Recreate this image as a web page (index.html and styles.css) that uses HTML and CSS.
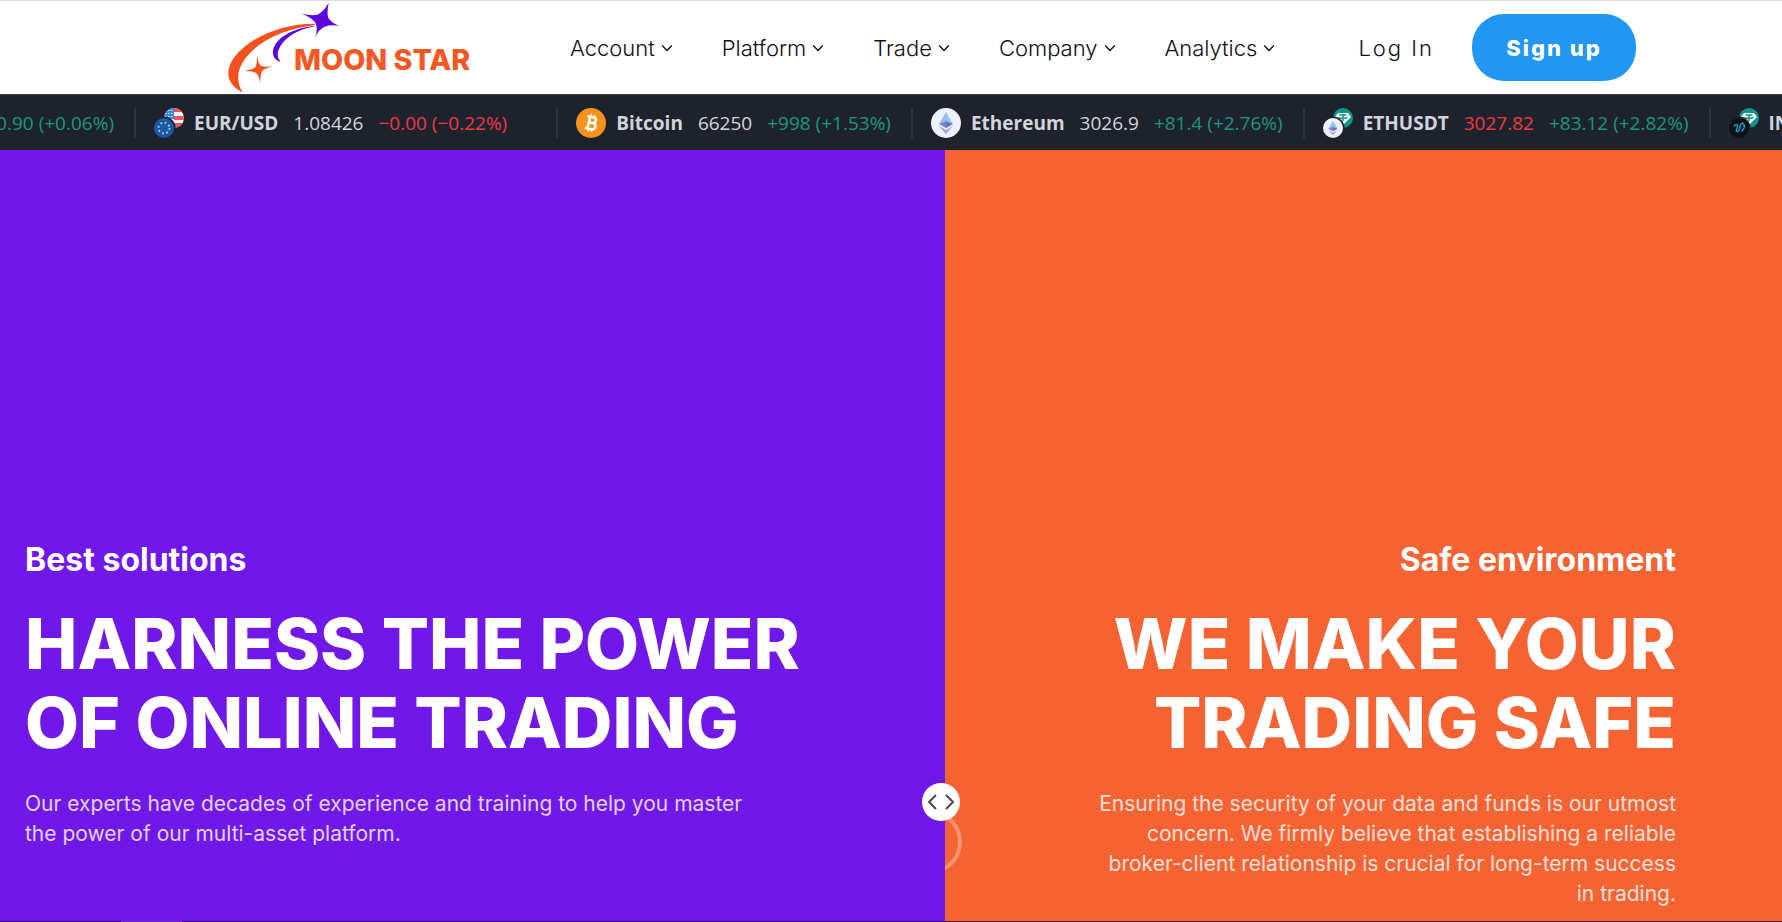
FILE: index.html
```html
<!DOCTYPE html>
<html lang="en">
<head>
<meta charset="utf-8">
<meta name="viewport" content="width=device-width, initial-scale=1">
<title>Moon Star</title>
<link rel="stylesheet" href="styles.css">
</head>
<body>
<svg class="defs" width="0" height="0" aria-hidden="true">
  <symbol id="chevron" viewBox="0 0 10 10"><path d="M1 3l4 4 4-4" fill="none" stroke="currentColor" stroke-width="1.2"/></symbol>
  <symbol id="eth" viewBox="0 0 30 30">
    <circle cx="15" cy="15" r="15" fill="#eff1fb"/>
    <path d="M15 4l-7 12 7-3z" fill="#a5b5f5"/><path d="M15 4l7 12-7-3z" fill="#7fd0e8"/>
    <path d="M8 16l7-3v7z" fill="#7184d8"/><path d="M22 16l-7-3v7z" fill="#6f6bd0"/>
    <path d="M8 18l7 8v-4z" fill="#9c9cf0"/><path d="M22 18l-7 8v-4z" fill="#c69bea"/>
  </symbol>
  <symbol id="tether" viewBox="0 0 20 20">
    <circle cx="10" cy="10" r="10" fill="#0e9488"/>
    <path d="M5 5h10l3 4-8 8-8-8z" fill="#fff"/>
    <path d="M6.500 7h7M10 7v6M5.500 9.500q4.500 2 9 0" fill="none" stroke="#0e9488" stroke-width="1.500"/>
  </symbol>
</svg>

<header class="header">
  <a class="logo" href="#" aria-label="Moon Star">
    <svg class="logo-art" viewBox="51 3 732 279">
      <path d="M314 71C220 70 120 110 73 172C44 212 48 252 98 278C76 240 82 205 110 170C152 118 230 86 314 75z" fill="#f4511e"/>
      <path d="M314 77C250 84 196 112 189 152C187 168 195 180 212 186C198 168 202 152 214 134C234 106 268 88 314 79z" fill="#5b06dc"/>
      <path d="M356 8Q350 40 355 54Q366 70 387 77Q360 74 344 80Q326 88 316 111Q324 86 317 70Q306 52 275 41Q304 48 322 44Q342 34 356 8z" fill="#5b06dc"/>
      <path d="M141 165Q145 192 152 197Q160 202 187 199Q162 206 156 214Q151 222 151 248Q146 224 138 219Q130 213 104 213Q130 208 136 202Q142 192 141 165z" fill="#f4511e"/>
      <text class="logo-text" x="252" y="211">MOON STAR</text>
    </svg>
  </a>
  <nav class="nav">
    <a href="#">Account <svg class="chevron"><use href="#chevron"/></svg></a>
    <a href="#">Platform <svg class="chevron"><use href="#chevron"/></svg></a>
    <a href="#">Trade <svg class="chevron"><use href="#chevron"/></svg></a>
    <a href="#">Company <svg class="chevron"><use href="#chevron"/></svg></a>
    <a href="#">Analytics <svg class="chevron"><use href="#chevron"/></svg></a>
  </nav>
  <div class="actions">
    <a class="login" href="#">Log In</a>
    <button class="signup" type="button">Sign up</button>
  </div>
</header>

<section class="ticker" aria-label="Market prices">
  <div class="quote lead"><span class="up">0.90 (+0.06%)</span></div>
  <div class="quote wide">
    <svg class="coin" viewBox="0 0 30 30">
      <defs><clipPath id="us"><circle cx="20" cy="10" r="10"/></clipPath></defs>
      <g clip-path="url(#us)"><path fill="#f4f4f6" d="M10 0h20v20H10z"/><path fill="#ee5358" d="M20 0h10v4H20zM20 8h10v4H20zM10 15h20v4H10z"/><path fill="#3b87d8" d="M10 0h10v11H10z"/><path d="M11 2.500h9M11 5.500h9M11 8.500h9" stroke="#d5e7fa" stroke-dasharray="1.500 1.500"/></g>
      <circle cx="10" cy="20" r="11.500" fill="#1e222d"/><circle cx="10" cy="20" r="10" fill="#1859b0"/>
      <circle cx="10" cy="20" r="5.500" fill="none" stroke="#c9d58a" stroke-width="1.800" stroke-dasharray="1.800 2.520"/>
    </svg>
    <b>EUR/USD</b><span>1.08426</span><span class="down">−0.00 (−0.22%)</span>
  </div>
  <div class="quote">
    <svg class="coin" viewBox="0 0 30 30"><circle cx="15" cy="15" r="15" fill="#f7931a"/><g transform="rotate(12 15 15)" fill="none" stroke="#fff" stroke-width="2.500"><path d="M10 9h6.500a2.800 2.800 0 0 1 0 5.700H13h4a3.100 3.100 0 0 1 0 6.300h-7M12.700 9v12"/><path d="M13.500 6.500v3M17 6.500v3M13.500 20.500v3M17 20.500v3" stroke-width="1.700"/></g></svg>
    <b>Bitcoin</b><span>66250</span><span class="up">+998 (+1.53%)</span>
  </div>
  <div class="quote">
    <svg class="coin"><use href="#eth"/></svg>
    <b>Ethereum</b><span>3026.9</span><span class="up">+81.4 (+2.76%)</span>
  </div>
  <div class="quote">
    <svg class="coin" viewBox="0 0 30 30"><use href="#tether" x="10" width="20" height="20"/><circle cx="10" cy="20" r="11.500" fill="#1e222d"/><use href="#eth" y="10" width="20" height="20"/></svg>
    <b>ETHUSDT</b><span class="down">3027.82</span><span class="up">+83.12 (+2.82%)</span>
  </div>
  <div class="quote">
    <svg class="coin" viewBox="0 0 30 30"><use href="#tether" x="10" width="20" height="20"/><circle cx="10" cy="20" r="11.500" fill="#1e222d"/><circle cx="10" cy="20" r="10" fill="#101114"/><path d="M5 18.500c1-3 4-2.500 3.500 0s-2.500 5 0 5 2-6 3.500-7.500 4.500.500 3 4-2 2-2.500 3.500" fill="none" stroke="#159bd0" stroke-width="1.500"/></svg>
    <b>INJUSDT</b>
  </div>
</section>

<main class="hero">
  <section class="panel left">
    <h3>Best solutions</h3>
    <h2>HARNESS THE POWER<br>OF ONLINE TRADING</h2>
    <p>Our experts have decades of experience and training to help you master<br>the power of our multi-asset platform.</p>
  </section>
  <section class="panel right">
    <span class="ring"></span>
    <button class="handle" type="button" aria-label="Drag to compare"><svg viewBox="0 0 38 38"><path d="M14 12l-7 7 7 7M24 12l7 7-7 7" fill="none" stroke="#4a4a4a" stroke-width="2"/></svg></button>
    <h3>Safe environment</h3>
    <h2>WE MAKE YOUR<br>TRADING SAFE</h2>
    <p>Ensuring the security of your data and funds is our utmost<br>concern. We firmly believe that establishing a reliable<br>broker-client relationship is crucial for long-term success<br>in trading.</p>
  </section>
</main>
<div class="progress"><span></span></div>
</body>
</html>
```
FILE: styles.css
```css
* { box-sizing: border-box; }
body {
  margin: 0;
  min-height: 100vh;
  display: flex;
  flex-direction: column;
  overflow-x: hidden;
  font-family: Inter, "Open Sans", sans-serif;
  background: #fff;
}
a { color: inherit; text-decoration: none; }
button { border: 0; padding: 0; font: inherit; cursor: pointer; }
.defs { position: absolute; }

.header {
  height: 94px;
  display: flex;
  align-items: center;
  padding: 0 146px 0 227px;
  border-top: 1px solid #ddd;
  color: #101018;
}
.logo { width: 244px; flex: none; }
.logo-art { display: block; width: 100%; overflow: visible; }
.logo-text { font-size: 86px; font-weight: 800; fill: #f4571f; }
.nav {
  flex: 1;
  display: flex;
  justify-content: space-between;
  margin: 0 83px 0 99px;
  font-size: 22px;
  font-weight: 300;
}
.nav a { display: flex; align-items: center; gap: 6px; }
.chevron { width: 12px; height: 12px; }
.actions { display: flex; align-items: center; gap: 38px; }
.login { font-size: 22px; font-weight: 300; letter-spacing: 2px; white-space: nowrap; }
.signup {
  width: 164px;
  height: 67px;
  border-radius: 32px;
  background: #2196f3;
  color: #fff;
  font-size: 22px;
  font-weight: 800;
  letter-spacing: 2px;
}

.ticker {
  height: 56px;
  display: flex;
  align-items: center;
  overflow: hidden;
  background: #1e222d;
  border-top: 1px solid #363a45;
  color: #d1d4dc;
  font-family: "Open Sans", "Noto Sans", sans-serif;
  font-size: 19px;
  font-weight: 500;
  white-space: nowrap;
}
.quote {
  flex: none;
  display: flex;
  align-items: center;
  gap: 15px;
  height: 30px;
  padding: 0 20px 0 18px;
  border-left: 2px solid #2f333e;
}
.quote b { font-weight: 700; }
.lead { width: 134px; justify-content: flex-end; border-left: 0; }
.wide { padding-right: 49px; }
.coin { width: 30px; height: 30px; margin-right: -5px; }
.up { color: #17967f; }
.down { color: #f23645; }

.hero { flex: 1; display: grid; grid-template-columns: 945fr 837fr; color: #fff; }
.panel { padding: 390px 25px 10px; }
.left { background: #7018e8; }
.right { position: relative; background: #f56333; padding-right: 106px; text-align: right; }
.panel h3 { margin: 0; font-size: 32px; line-height: 40px; font-weight: 700; }
.panel h2 { margin: 24px 0 27px; font-size: 70px; line-height: 79px; font-weight: 800; white-space: nowrap; }
.panel p { margin: 0; font-size: 21px; line-height: 30px; opacity: .8; white-space: nowrap; }
.ring {
  position: absolute;
  left: -47px;
  top: 660px;
  width: 64px;
  height: 64px;
  border: 4px solid rgba(255, 255, 255, .3);
  border-radius: 50%;
  clip-path: inset(0 0 0 47px);
}
.handle {
  position: absolute;
  left: -23px;
  top: 633px;
  width: 38px;
  height: 38px;
  border-radius: 50%;
  background: #fff;
}
.handle svg { display: block; }
.progress { height: 1px; background: #35105f; }
.progress span { display: block; width: 61px; height: 1px; margin-left: 121px; background: #6a35a8; }
```
